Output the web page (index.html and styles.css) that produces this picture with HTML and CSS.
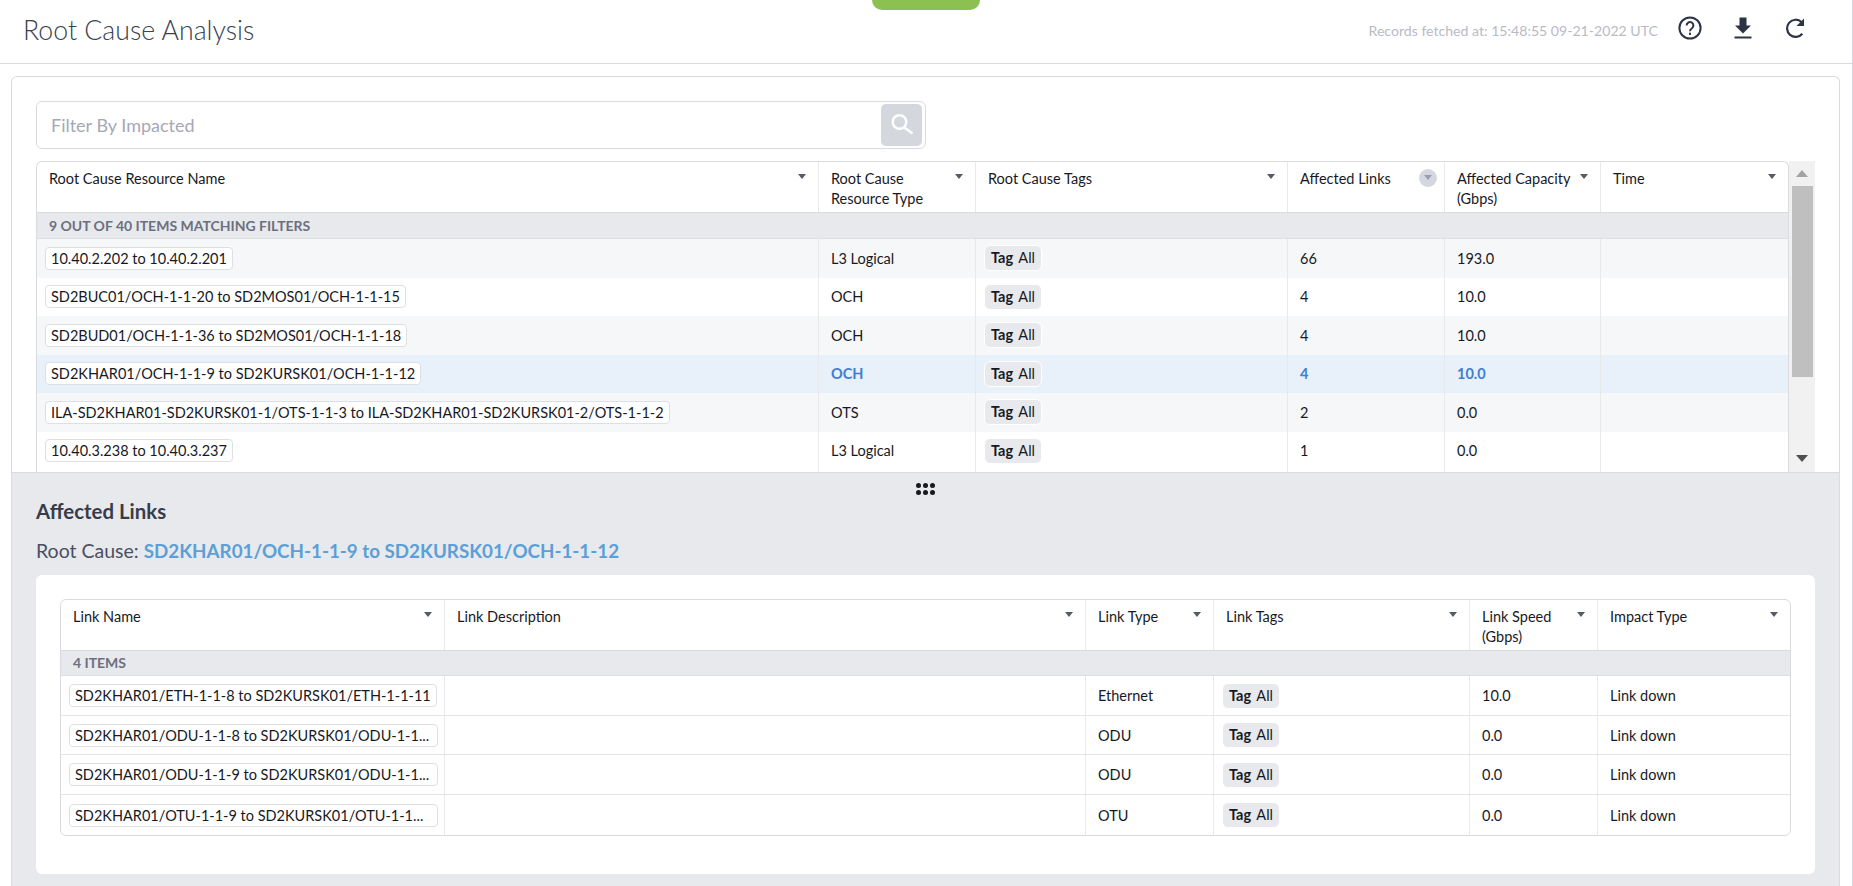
FILE: index.html
```html
<!DOCTYPE html>
<html lang="en">
<head>
<meta charset="utf-8">
<title>Root Cause Analysis</title>
<link rel="stylesheet" href="styles.css">
</head>
<body>
<div class="tab"></div>
<header class="top">
  <h1>Root Cause Analysis</h1>
  <div class="top-right">
    <span class="fetched">Records fetched at: 15:48:55 09-21-2022 UTC</span>
    <svg class="ic" width="26" height="26" viewBox="0 0 26 26"><circle cx="13" cy="13" r="10.6" fill="none" stroke="#2c3345" stroke-width="2"/><path d="M9.6 10.4a3.4 3.4 0 1 1 5.4 2.8c-1.3.9-2 1.5-2 3" fill="none" stroke="#2c3345" stroke-width="2"/><rect x="12" y="17.7" width="2" height="2.2" fill="#2c3345"/></svg>
    <svg class="ic" width="26" height="26" viewBox="0 0 26 26"><path d="M9.5 2.500h7v8h4.500l-8 8-8-8h4.500z" fill="#2c3345"/><rect x="4.500" y="21.500" width="17" height="2" fill="#2c3345"/></svg>
    <svg class="ic" width="26" height="26" viewBox="0 0 26 26"><path d="M19.3 18.800A8.600 8.600 0 1 1 18.500 7" fill="none" stroke="#2c3345" stroke-width="2.200"/><path d="M21 3.500v7.500h-7.500z" fill="#2c3345"/></svg>
  </div>
</header>
<main class="panel">
  <section class="upper">
    <div class="search">
      <span class="ph">Filter By Impacted</span>
      <button class="search-btn" type="button"><svg width="24" height="24" viewBox="0 0 24 24"><circle cx="9.500" cy="9" r="6.800" fill="none" stroke="#fff" stroke-width="2.400"/><path d="M14.500 14.500l8 6" stroke="#fff" stroke-width="2.600" fill="none"/></svg></button>
    </div>
    <div class="table-wrap">
      <div class="grid">
        <div class="thead t1">
          <div class="th">Root Cause Resource Name<i class="caret"></i></div>
          <div class="th">Root Cause Resource Type<i class="caret"></i></div>
          <div class="th">Root Cause Tags<i class="caret"></i></div>
          <div class="th">Affected Links<i class="sorted"></i></div>
          <div class="th">Affected Capacity (Gbps)<i class="caret"></i></div>
          <div class="th">Time<i class="caret"></i></div>
        </div>
        <div class="group">9 OUT OF 40 ITEMS MATCHING FILTERS</div>
        <div class="row t1 zebra"><div class="td"><span class="chip">10.40.2.202 to 10.40.2.201</span></div><div class="td">L3 Logical</div><div class="td"><span class="tag"><b>Tag</b> All</span></div><div class="td">66</div><div class="td">193.0</div><div class="td"></div></div>
        <div class="row t1"><div class="td"><span class="chip">SD2BUC01/OCH-1-1-20 to SD2MOS01/OCH-1-1-15</span></div><div class="td">OCH</div><div class="td"><span class="tag"><b>Tag</b> All</span></div><div class="td">4</div><div class="td">10.0</div><div class="td"></div></div>
        <div class="row t1 zebra"><div class="td"><span class="chip">SD2BUD01/OCH-1-1-36 to SD2MOS01/OCH-1-1-18</span></div><div class="td">OCH</div><div class="td"><span class="tag"><b>Tag</b> All</span></div><div class="td">4</div><div class="td">10.0</div><div class="td"></div></div>
        <div class="row t1 selected"><div class="td"><span class="chip">SD2KHAR01/OCH-1-1-9 to SD2KURSK01/OCH-1-1-12</span></div><div class="td">OCH</div><div class="td"><span class="tag"><b>Tag</b> All</span></div><div class="td">4</div><div class="td">10.0</div><div class="td"></div></div>
        <div class="row t1 zebra"><div class="td"><span class="chip">ILA-SD2KHAR01-SD2KURSK01-1/OTS-1-1-3 to ILA-SD2KHAR01-SD2KURSK01-2/OTS-1-1-2</span></div><div class="td">OTS</div><div class="td"><span class="tag"><b>Tag</b> All</span></div><div class="td">2</div><div class="td">0.0</div><div class="td"></div></div>
        <div class="row t1"><div class="td"><span class="chip">10.40.3.238 to 10.40.3.237</span></div><div class="td">L3 Logical</div><div class="td"><span class="tag"><b>Tag</b> All</span></div><div class="td">1</div><div class="td">0.0</div><div class="td"></div></div>
        <div class="row-tail t1"><div class="td"></div><div class="td"></div><div class="td"></div><div class="td"></div><div class="td"></div><div class="td"></div></div>
      </div>
      <div class="scrollbar">
        <i class="arrow up"></i>
        <div class="thumb"></div>
        <i class="arrow down"></i>
      </div>
    </div>
  </section>
  <section class="lower">
    <div class="handle"><i></i><i></i><i></i><i></i><i></i><i></i></div>
    <h2>Affected Links</h2>
    <p class="cause">Root Cause: <b>SD2KHAR01/OCH-1-1-9 to SD2KURSK01/OCH-1-1-12</b></p>
    <div class="card">
      <div class="grid framed">
        <div class="thead t2">
          <div class="th">Link Name<i class="caret"></i></div>
          <div class="th">Link Description<i class="caret"></i></div>
          <div class="th">Link Type<i class="caret"></i></div>
          <div class="th">Link Tags<i class="caret"></i></div>
          <div class="th">Link Speed (Gbps)<i class="caret"></i></div>
          <div class="th">Impact Type<i class="caret"></i></div>
        </div>
        <div class="group">4 ITEMS</div>
        <div class="row t2 ruled r40"><div class="td"><span class="chip">SD2KHAR01/ETH-1-1-8 to SD2KURSK01/ETH-1-1-11</span></div><div class="td"></div><div class="td">Ethernet</div><div class="td"><span class="tag"><b>Tag</b> All</span></div><div class="td">10.0</div><div class="td">Link down</div></div>
        <div class="row t2 ruled r39"><div class="td"><span class="chip cut">SD2KHAR01/ODU-1-1-8 to SD2KURSK01/ODU-1-1...</span></div><div class="td"></div><div class="td">ODU</div><div class="td"><span class="tag"><b>Tag</b> All</span></div><div class="td">0.0</div><div class="td">Link down</div></div>
        <div class="row t2 ruled r40"><div class="td"><span class="chip cut">SD2KHAR01/ODU-1-1-9 to SD2KURSK01/ODU-1-1...</span></div><div class="td"></div><div class="td">ODU</div><div class="td"><span class="tag"><b>Tag</b> All</span></div><div class="td">0.0</div><div class="td">Link down</div></div>
        <div class="row t2 r40"><div class="td"><span class="chip cut">SD2KHAR01/OTU-1-1-9 to SD2KURSK01/OTU-1-1...</span></div><div class="td"></div><div class="td">OTU</div><div class="td"><span class="tag"><b>Tag</b> All</span></div><div class="td">0.0</div><div class="td">Link down</div></div>
      </div>
    </div>
  </section>
</main>
</body>
</html>
```
FILE: styles.css
```css
* { box-sizing: border-box; }
html, body { margin: 0; height: 100%; overflow: hidden; }
body { background: #fff; font-family: "Lato", "Noto Sans", sans-serif; font-size: 14.5px; color: #17191f; border-right: 1px solid #d4d6da; position: relative; }
.tab { position: absolute; top: -10px; left: 872px; width: 108px; height: 20px; background: #8cc152; border-radius: 10px; }
.top { height: 64px; border-bottom: 1px solid #d9dbdf; display: flex; align-items: center; justify-content: space-between; padding: 0 43px 4px 23px; }
h1 { margin: 0; font-weight: 300; font-size: 26.7px; color: #3a4150; }
.top-right { display: flex; align-items: center; padding-bottom: 3px; }
.fetched { color: #b9bac6; font-size: 14.1px; margin: 4px 19px 0 0; }
.ic { margin-left: 27px; display: block; }
.ic:first-of-type { margin-left: 0; }
.panel { margin: 12px 12px 0 11px; height: 810px; border: 1px solid #d9dbdf; border-bottom: 0; border-radius: 6px 6px 0 0; }
.upper { padding: 24px 24px 0 24px; height: 395px; }
.search { width: 890px; height: 48px; border: 1px solid #d9dbdf; border-radius: 6px; display: flex; align-items: center; justify-content: space-between; padding: 0 3px 0 14px; }
.ph { color: #a6a8b5; font-size: 18px; }
.search-btn { width: 41px; height: 42px; border: 0; border-radius: 5px; background: #d5d7de; display: flex; align-items: center; justify-content: center; padding: 0; }
.table-wrap { display: flex; margin-top: 12px; height: 311px; }
.grid { flex: 1; border: 1px solid #d9dbdf; border-bottom: 0; border-radius: 6px 6px 0 0; overflow: hidden; }
.grid.framed { border-bottom: 1px solid #d9dbdf; border-radius: 6px; }
.t1 { display: grid; grid-template-columns: 781px 157px 312px 157px 156px 1fr; }
.t2 { display: grid; grid-template-columns: 383px 641px 128px 256px 128px 1fr; }
.thead { height: 51px; border-bottom: 1px solid #d9dbdf; }
.th { position: relative; padding: 7px 26px 0 12px; line-height: 19.5px; border-left: 1px solid #e8e9ec; }
.th:first-child, .td:first-child { border-left: 0; }
.caret { position: absolute; right: 12px; top: 12px; width: 0; height: 0; border: 4px solid transparent; border-top: 5px solid #555a66; border-bottom: 0; }
.sorted { position: absolute; right: 7px; top: 7px; width: 18px; height: 18px; border-radius: 50%; background: #d5d7e0; }
.sorted::after { content: ""; position: absolute; left: 5px; top: 6px; width: 0; height: 0; border: 4px solid transparent; border-top: 5px solid #9a9eb0; border-bottom: 0; }
.group { height: 26px; background: #e8e9ec; border-bottom: 1px solid #dcdee2; padding-left: 12px; line-height: 25px; font-size: 14px; font-weight: 700; color: #6b7080; }
.framed .group { height: 25px; line-height: 24px; }
.row { height: 38.5px; }
.row-tail { height: 10px; }
.r40 { height: 40px; }
.r39 { height: 39px; }
.zebra { background: #f6f7f9; }
.selected { background: #e8f0fa; }
.selected .td { color: #3f7fd0; font-weight: 700; }
.selected .td .chip, .selected .td .tag { font-weight: 400; color: #17191f; }
.selected .td .tag b { font-weight: 700; }
.ruled { border-bottom: 1px solid #e3e4e8; }
.td { display: flex; align-items: center; padding-left: 12px; border-left: 1px solid #e8e9ec; min-width: 0; }
.td:first-child { padding-left: 8px; }
.chip { display: block; height: 23px; line-height: 21px; padding: 0 5px; background: #fff; border: 1px solid #dcdfe4; border-radius: 4px; white-space: nowrap; }
.cut { width: 369px; }
.t1 .td:nth-child(3) .tag, .t2 .td:nth-child(4) .tag { margin-left: -4px; }
.tag { display: block; height: 26px; line-height: 24px; width: 58px; padding: 0 0 0 6px; background: #e8e9ec; border: 1px solid #fff; border-radius: 6px; font-size: 14.5px; white-space: nowrap; }
.tag b { margin-right: 2px; }
.scrollbar { width: 26px; background: #f1f1f1; position: relative; padding: 25px 2px 0 3px; }
.thumb { height: 191px; background: #bfbfbf; }
.arrow { position: absolute; left: 7px; width: 0; height: 0; border: 6px solid transparent; }
.arrow.up { top: 9px; border-top: 0; border-bottom: 7px solid #a3a3a3; }
.arrow.down { bottom: 10px; border-bottom: 0; border-top: 7px solid #505050; }
.lower { background: #e8e9ec; height: 414px; border-top: 1px solid #d9dbdf; padding: 0 24px; position: relative; }
.handle { position: absolute; left: 903.5px; top: 9.5px; display: grid; grid-template-columns: repeat(3, 5px); gap: 2px; }
.handle i { width: 5px; height: 5px; border-radius: 50%; background: #17191f; }
h2 { margin: 0; padding-top: 25px; font-size: 20.4px; line-height: 26px; font-weight: 700; color: #363c49; }
.cause { margin: 0; padding-top: 14px; font-size: 19.5px; line-height: 26px; color: #4b5060; }
.cause b { color: #5b9fd9; font-weight: 700; font-size: 18.8px; }
.card { margin-top: 11px; background: #fff; border-radius: 6px; padding: 24px; height: 299px; }
```
